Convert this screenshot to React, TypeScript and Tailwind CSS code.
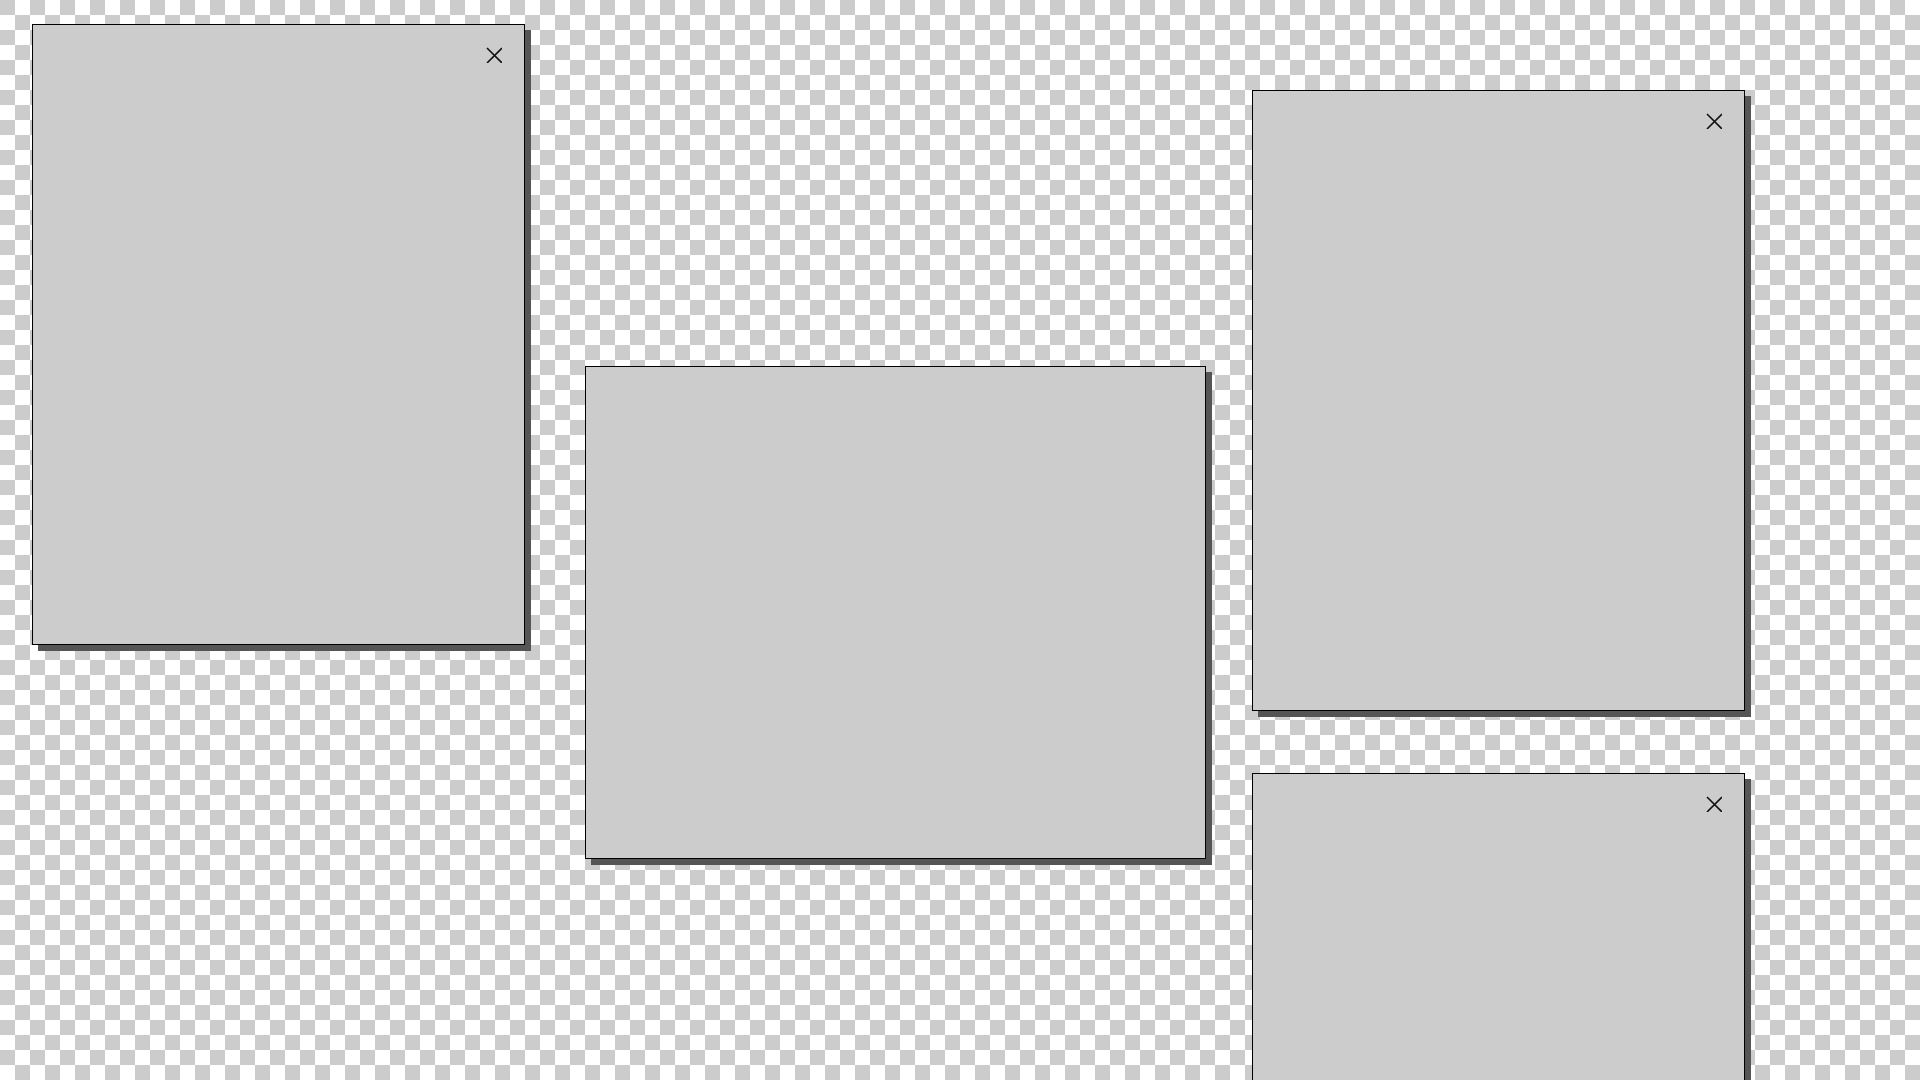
import React from "react";

function CloseIcon() {
  return (
    <svg width="16" height="16" viewBox="0 0 16 16" className="absolute left-[453px] top-[22px]">
      <path d="M1 1 L16 16 M16 1 L1 16" stroke="#111" strokeWidth="1.6" fill="none" />
    </svg>
  );
}

function Win({ className, close }: { className: string; close?: boolean }) {
  return (
    <div
      className={
        "absolute bg-[#cccccc] border border-black shadow-[6px_6px_0_0_#555555] " + className
      }
    >
      {close && <CloseIcon />}
    </div>
  );
}

export default function App() {
  return (
    <div className="relative w-[1920px] h-[1080px] overflow-hidden bg-[conic-gradient(#ffffff_25%,#cccccc_0_50%,#ffffff_0_75%,#cccccc_0)] bg-[length:30px_30px]">
      <Win className="left-[32px] top-[24px] w-[493px] h-[621px]" close />
      <Win className="left-[585px] top-[366px] w-[621px] h-[493px]" />
      <Win className="left-[1252px] top-[90px] w-[493px] h-[621px]" close />
      <Win className="left-[1252px] top-[773px] w-[493px] h-[621px]" close />
    </div>
  );
}
